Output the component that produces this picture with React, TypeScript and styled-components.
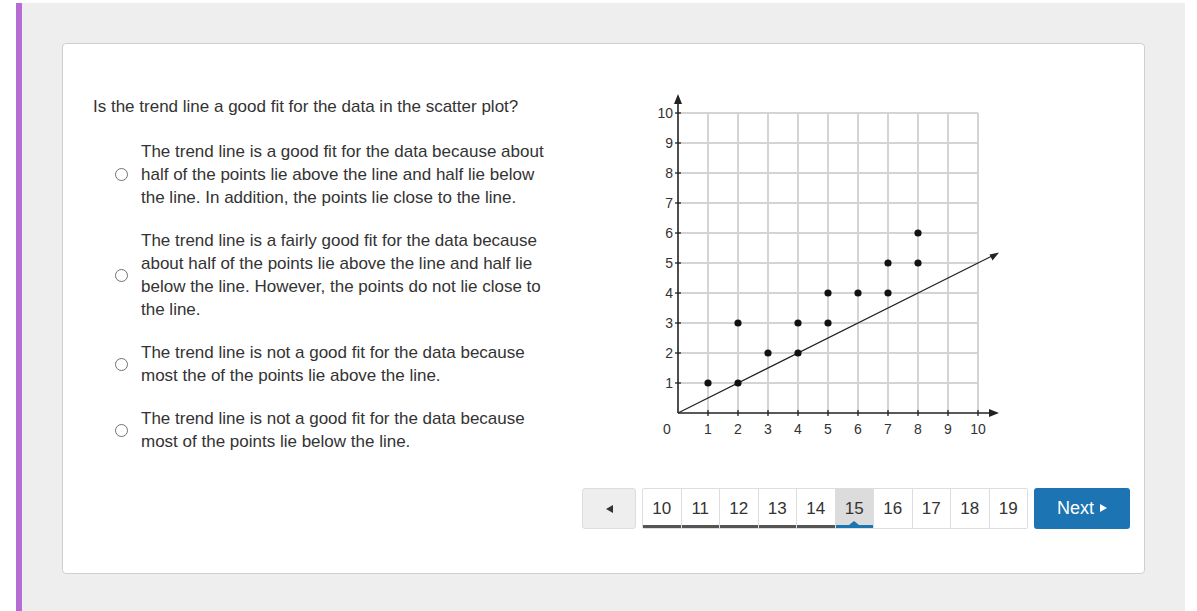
import React from "react";
import styled, { createGlobalStyle } from "styled-components";

const GlobalStyle = createGlobalStyle`
  html, body {
    margin: 0;
    padding: 0;
    background: #fff;
  }
  body {
    font-family: "Liberation Sans", Arial, sans-serif;
    color: #333;
  }
`;

const Page = styled.div`
  padding: 3px 12px 0 16px;
  min-height: 100vh;
  box-sizing: border-box;
  display: flex;
`;

const Frame = styled.div`
  flex: 1;
  background: #eeeeee;
  border-left: 6px solid #b66dd3;
  padding: 40px 40px 37px 40px;
`;

const Card = styled.div`
  background: #fff;
  border: 1px solid #cfcfcf;
  border-radius: 4px;
  padding: 46px 14px 44px 30px;
`;

const Content = styled.div`
  display: flex;
  align-items: flex-start;
`;

const Questions = styled.div`
  flex: 0 0 540px;
  display: flex;
  flex-direction: column;
`;

const Prompt = styled.p`
  margin: 5px 0 22px;
  font-size: 17px;
  line-height: 23px;
  color: #333;
`;

const Option = styled.label`
  display: flex;
  align-items: center;
  gap: 13px;
  padding-left: 22px;
  margin-bottom: 20px;
  cursor: pointer;
  &:last-child {
    margin-bottom: 0;
  }
`;

const Radio = styled.span`
  flex: 0 0 auto;
  width: 11px;
  height: 11px;
  border: 1px solid #707070;
  border-radius: 50%;
  background: #fff;
`;

const OptionText = styled.span`
  width: 412px;
  font-size: 17px;
  line-height: 23px;
  color: #333;
`;

const Graph = styled.svg`
  display: block;
  margin-left: 12px;
`;

const Footer = styled.div`
  display: flex;
  justify-content: flex-end;
  gap: 6px;
  margin-top: 35px;
  height: 41px;
`;

const PrevButton = styled.button`
  width: 54px;
  height: 41px;
  background: #eeeeee;
  border: 1px solid #dddddd;
  border-radius: 3px;
  display: flex;
  align-items: center;
  justify-content: center;
  padding: 0;
`;

const Pages = styled.div`
  display: flex;
  width: 386px;
  border: 1px solid #dddddd;
  border-radius: 2px;
  box-sizing: border-box;
`;

const PageCell = styled.div<{ $state: "visited" | "current" | "plain" }>`
  position: relative;
  flex: 1;
  display: flex;
  align-items: center;
  justify-content: center;
  font-size: 17px;
  color: #333;
  background: ${(p) => (p.$state === "current" ? "#dcdcdc" : "#fff")};
  box-shadow: ${(p) =>
    p.$state === "visited"
      ? "inset 0 -3px 0 #555"
      : p.$state === "current"
      ? "inset 0 -3px 0 #1c74b3"
      : "none"};
  & + & {
    border-left: 1px solid #dddddd;
  }
  ${(p) =>
    p.$state === "current" &&
    `
    &::after {
      content: "";
      position: absolute;
      left: 50%;
      bottom: 3px;
      margin-left: -5px;
      border-left: 5px solid transparent;
      border-right: 5px solid transparent;
      border-bottom: 4px solid #1c74b3;
    }
  `}
`;

const NextButton = styled.button`
  width: 96px;
  height: 41px;
  background: #1c74b3;
  border: none;
  border-radius: 3px;
  color: #fff;
  font-family: "Liberation Sans", Arial, sans-serif;
  font-size: 18px;
  display: flex;
  align-items: center;
  justify-content: center;
  gap: 6px;
  padding: 0 0 1px;
`;

const options = [
  "The trend line is a good fit for the data because about half of the points lie above the line and half lie below the line. In addition, the points lie close to the line.",
  "The trend line is a fairly good fit for the data because about half of the points lie above the line and half lie below the line. However, the points do not lie close to the line.",
  "The trend line is not a good fit for the data because most the of the points lie above the line.",
  "The trend line is not a good fit for the data because most of the points lie below the line.",
];

const points: [number, number][] = [
  [1, 1],
  [2, 1],
  [2, 3],
  [3, 2],
  [4, 2],
  [4, 3],
  [5, 3],
  [5, 4],
  [6, 4],
  [7, 4],
  [7, 5],
  [8, 5],
  [8, 6],
];

const OX = 33;
const OY = 323;
const U = 30;
const px = (v: number) => OX + v * U;
const py = (v: number) => OY - v * U;
const steps = [1, 2, 3, 4, 5, 6, 7, 8, 9, 10];

const ScatterPlot = () => (
  <Graph width="360" height="350" viewBox="0 0 360 350">
    {steps.map((i) => (
      <g key={i}>
        <line x1={px(i)} y1={py(0)} x2={px(i)} y2={py(10)} stroke="#d4d4d4" strokeWidth="2" />
        <line x1={px(0)} y1={py(i)} x2={px(10)} y2={py(i)} stroke="#d4d4d4" strokeWidth="2" />
      </g>
    ))}
    {/* axes */}
    <line x1={OX} y1={OY} x2={OX} y2={11} stroke="#222" strokeWidth="1.6" />
    <polygon points={`${OX},4 ${OX - 4},14 ${OX + 4},14`} fill="#222" />
    <line x1={OX} y1={OY} x2={346} y2={OY} stroke="#222" strokeWidth="1.6" />
    <polygon points={`354,${OY} 344,${OY - 4} 344,${OY + 4}`} fill="#222" />
    {steps.map((i) => (
      <g key={`t${i}`}>
        <line x1={px(i)} y1={OY - 3} x2={px(i)} y2={OY + 3} stroke="#222" strokeWidth="1.3" />
        <line x1={OX - 3} y1={py(i)} x2={OX + 3} y2={py(i)} stroke="#222" strokeWidth="1.3" />
      </g>
    ))}
    <g fontFamily="Liberation Sans, Arial, sans-serif" fontSize="14" fill="#333">
      {steps.map((i) => (
        <text key={`xl${i}`} x={px(i)} y={344} textAnchor="middle">
          {i}
        </text>
      ))}
      {steps.map((i) => (
        <text key={`yl${i}`} x={OX - 5} y={py(i) + 5} textAnchor="end">
          {i}
        </text>
      ))}
      <text x={22} y={344} textAnchor="middle">
        0
      </text>
    </g>
    {/* trend line */}
    <line x1={OX} y1={OY} x2={349} y2={165} stroke="#222" strokeWidth="1.2" />
    <polygon points="354,162.5 344.5,164.5 347.5,170.5" fill="#222" />
    {points.map(([x, y]) => (
      <circle key={`${x}-${y}`} cx={px(x)} cy={py(y)} r="3.6" fill="#111" />
    ))}
  </Graph>
);

const pageNumbers = [10, 11, 12, 13, 14, 15, 16, 17, 18, 19];

const App = () => {
  return (
    <>
      <GlobalStyle />
      <Page>
        <Frame>
          <Card>
            <Content>
              <Questions>
                <Prompt>Is the trend line a good fit for the data in the scatter plot?</Prompt>
                {options.map((text) => (
                  <Option key={text}>
                    <Radio />
                    <OptionText>{text}</OptionText>
                  </Option>
                ))}
              </Questions>
              <ScatterPlot />
            </Content>
            <Footer>
              <PrevButton aria-label="Previous">
                <svg width="7" height="8" viewBox="0 0 7 8">
                  <polygon points="0,4 7,0 7,8" fill="#333" />
                </svg>
              </PrevButton>
              <Pages>
                {pageNumbers.map((n) => (
                  <PageCell
                    key={n}
                    $state={n < 15 ? "visited" : n === 15 ? "current" : "plain"}
                  >
                    {n}
                  </PageCell>
                ))}
              </Pages>
              <NextButton>
                Next
                <svg width="7" height="8" viewBox="0 0 7 8">
                  <polygon points="7,4 0,0 0,8" fill="#fff" />
                </svg>
              </NextButton>
            </Footer>
          </Card>
        </Frame>
      </Page>
    </>
  );
};

export default App;
